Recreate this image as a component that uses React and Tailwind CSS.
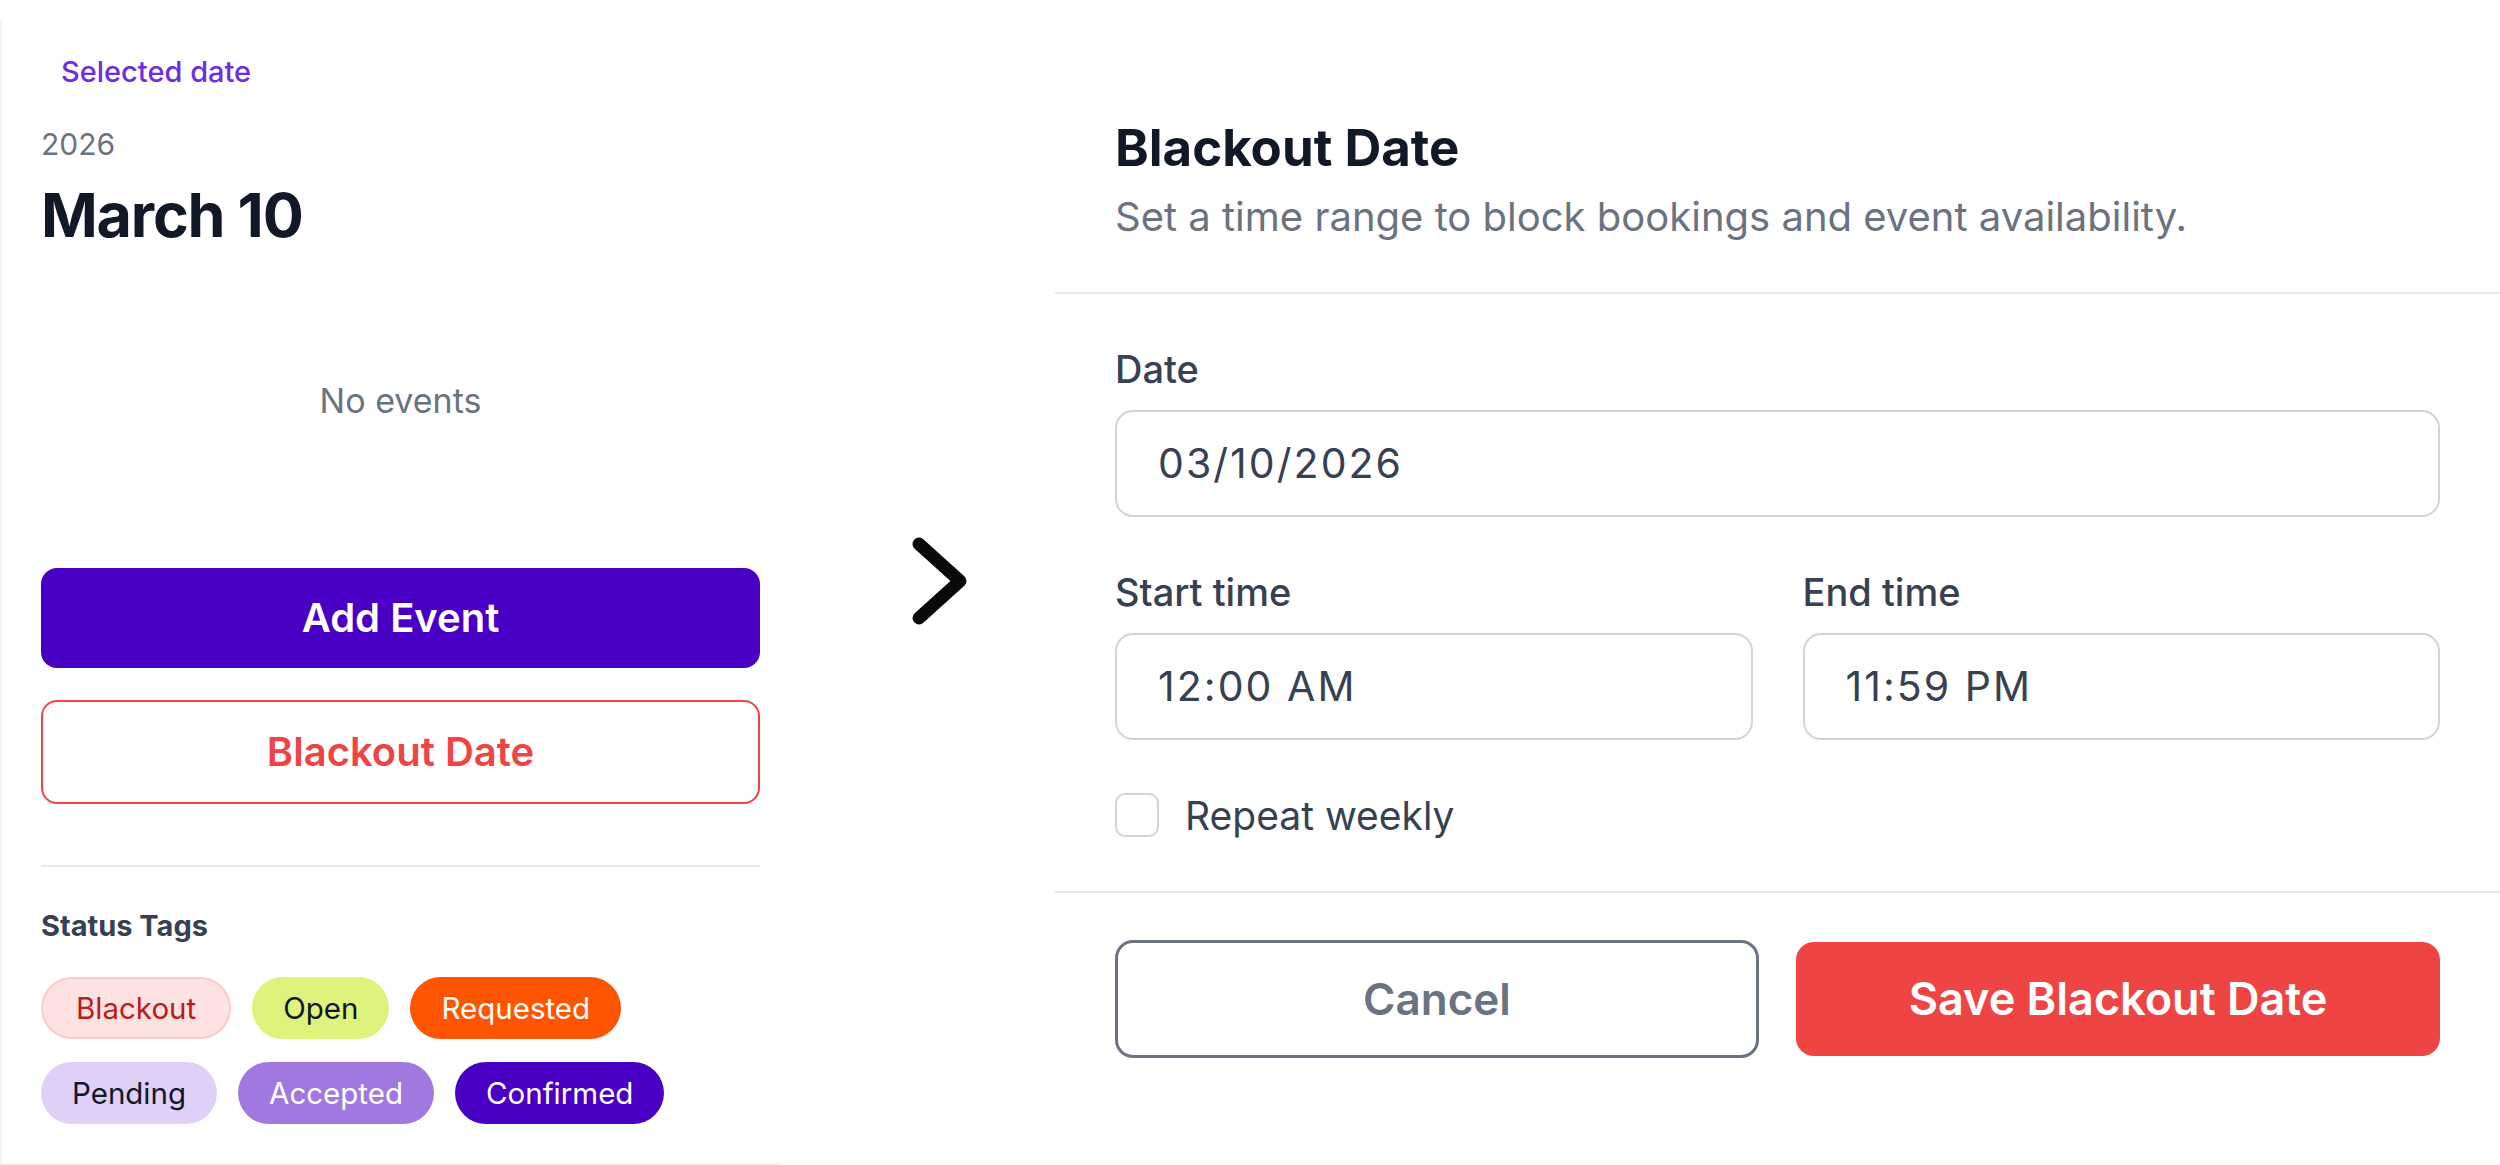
const tags = [
  [
    { label: 'Blackout', cls: 'bg-[#fee2e2] border-2 border-[#fecaca] text-[#b91c1c] px-[33px]' },
    { label: 'Open', cls: 'bg-[#dff27c] text-[#0f172a] px-[31px]' },
    { label: 'Requested', cls: 'bg-[#ff5500] text-white px-[31px]' },
  ],
  [
    { label: 'Pending', cls: 'bg-[#e0d0f7] text-[#111827] px-[31px]' },
    { label: 'Accepted', cls: 'bg-[#a078e0] text-white px-[31px]' },
    { label: 'Confirmed', cls: 'bg-[#4a00c4] text-white px-[31px]' },
  ],
];

const SelectedDay = () => (
  <div className="w-[781px] h-[1145px] mt-[20px] border-l-2 border-b-2 border-[#f1f2f4] pl-[39px] pr-[21px] pt-[34px] flex flex-col">
    <p className="ml-[20px] text-[29px] leading-[36px] font-medium text-[#6d2ee3]">Selected date</p>
    <p className="mt-[36px] text-[30px] leading-[36px] text-[#6b7280]">2026</p>
    <h1 className="mt-[21px] text-[61px] leading-[64px] font-bold tracking-[-0.02em] text-[#111827]">March 10</h1>

    <p className="mt-[134px] text-center text-[34px] leading-[40px] text-[#6b7280]">No events</p>

    <button className="mt-[147px] h-[100px] w-full rounded-[16px] bg-[#4a00c4] text-white text-[40px] font-semibold">
      Add Event
    </button>
    <button className="mt-[32px] h-[104px] w-full rounded-[16px] border-2 border-[#ef4444] bg-white text-[#ef4444] text-[40px] font-semibold">
      Blackout Date
    </button>

    <div className="mt-[61px] h-[2px] w-full bg-[#e5e7eb]" />

    {/* Status Tags */}
    <p className="mt-[42px] text-[29px] leading-[33px] font-bold text-[#374151]">Status Tags</p>
    <div className="mt-[35px] flex flex-col gap-[23px]">
      {tags.map((row, i) => (
        <div key={i} className="flex gap-[21px]">
          {row.map((t) => (
            <span
              key={t.label}
              className={`h-[62px] flex items-center rounded-full text-[29.5px] ${t.cls}`}
            >
              {t.label}
            </span>
          ))}
        </div>
      ))}
    </div>
  </div>
);

const Field = ({ label, value, className = '' }) => (
  <div className={`flex flex-col ${className}`}>
    <label className="text-[38px] leading-[44px] font-medium text-[#374151]">{label}</label>
    <div className="mt-[19px] h-[107px] flex items-center rounded-[18px] border-2 border-[#d1d5db] pl-[41px] text-[41px] tracking-[0.05em] text-[#374151]">
      {value}
    </div>
  </div>
);

const BlackoutModal = () => (
  <div className="w-[1445px] mt-[72px] bg-white flex flex-col">
    <div className="px-[60px] pt-[47px]">
      <h2 className="text-[51px] leading-[58px] font-bold text-[#111827]">Blackout Date</h2>
      <p className="mt-[16px] text-[40px] leading-[48px] text-[#6b7280]">
        Set a time range to block bookings and event availability.
      </p>
    </div>
    <div className="mt-[51px] h-[2px] w-full bg-[#e5e7eb]" />

    <div className="px-[60px] pt-[53px]">
      <Field label="Date" value="03/10/2026" />
      <div className="mt-[53px] grid grid-cols-2 gap-[50px]">
        <Field label="Start time" value="12:00 AM" />
        <Field label="End time" value="11:59 PM" />
      </div>
      <div className="mt-[53px] flex items-start gap-[26px]">
        <span className="w-[44px] h-[44px] rounded-[10px] border-2 border-[#d1d5db] bg-white" />
        <span className="mt-[1px] text-[39px] leading-[44px] text-[#374151]">Repeat weekly</span>
      </div>
    </div>

    <div className="mt-[53px] h-[2px] w-full bg-[#e5e7eb]" />

    <div className="px-[60px] mt-[47px] grid grid-cols-2 gap-[37px]">
      <button className="h-[118px] rounded-[18px] border-[3px] border-[#6b7280] bg-white text-[44px] font-semibold text-[#6b7280]">
        Cancel
      </button>
      <button className="h-[114px] mt-[2px] rounded-[18px] bg-[#ef4444] text-[45px] font-semibold text-white">
        Save Blackout Date
      </button>
    </div>
  </div>
);

export default function App() {
  return (
    <div className="w-[2500px] h-[1165px] bg-white flex font-['Inter',sans-serif] overflow-hidden">
      <SelectedDay />
      <div className="w-[274px] shrink-0">
        <svg className="mt-[520px] ml-[119px]" width="80" height="120" viewBox="0 0 80 120" fill="none">
          <path d="M19 24 L60 61 L19 98" stroke="#0a0a0a" strokeWidth="13" strokeLinecap="round" strokeLinejoin="round" />
        </svg>
      </div>
      <BlackoutModal />
    </div>
  );
}
